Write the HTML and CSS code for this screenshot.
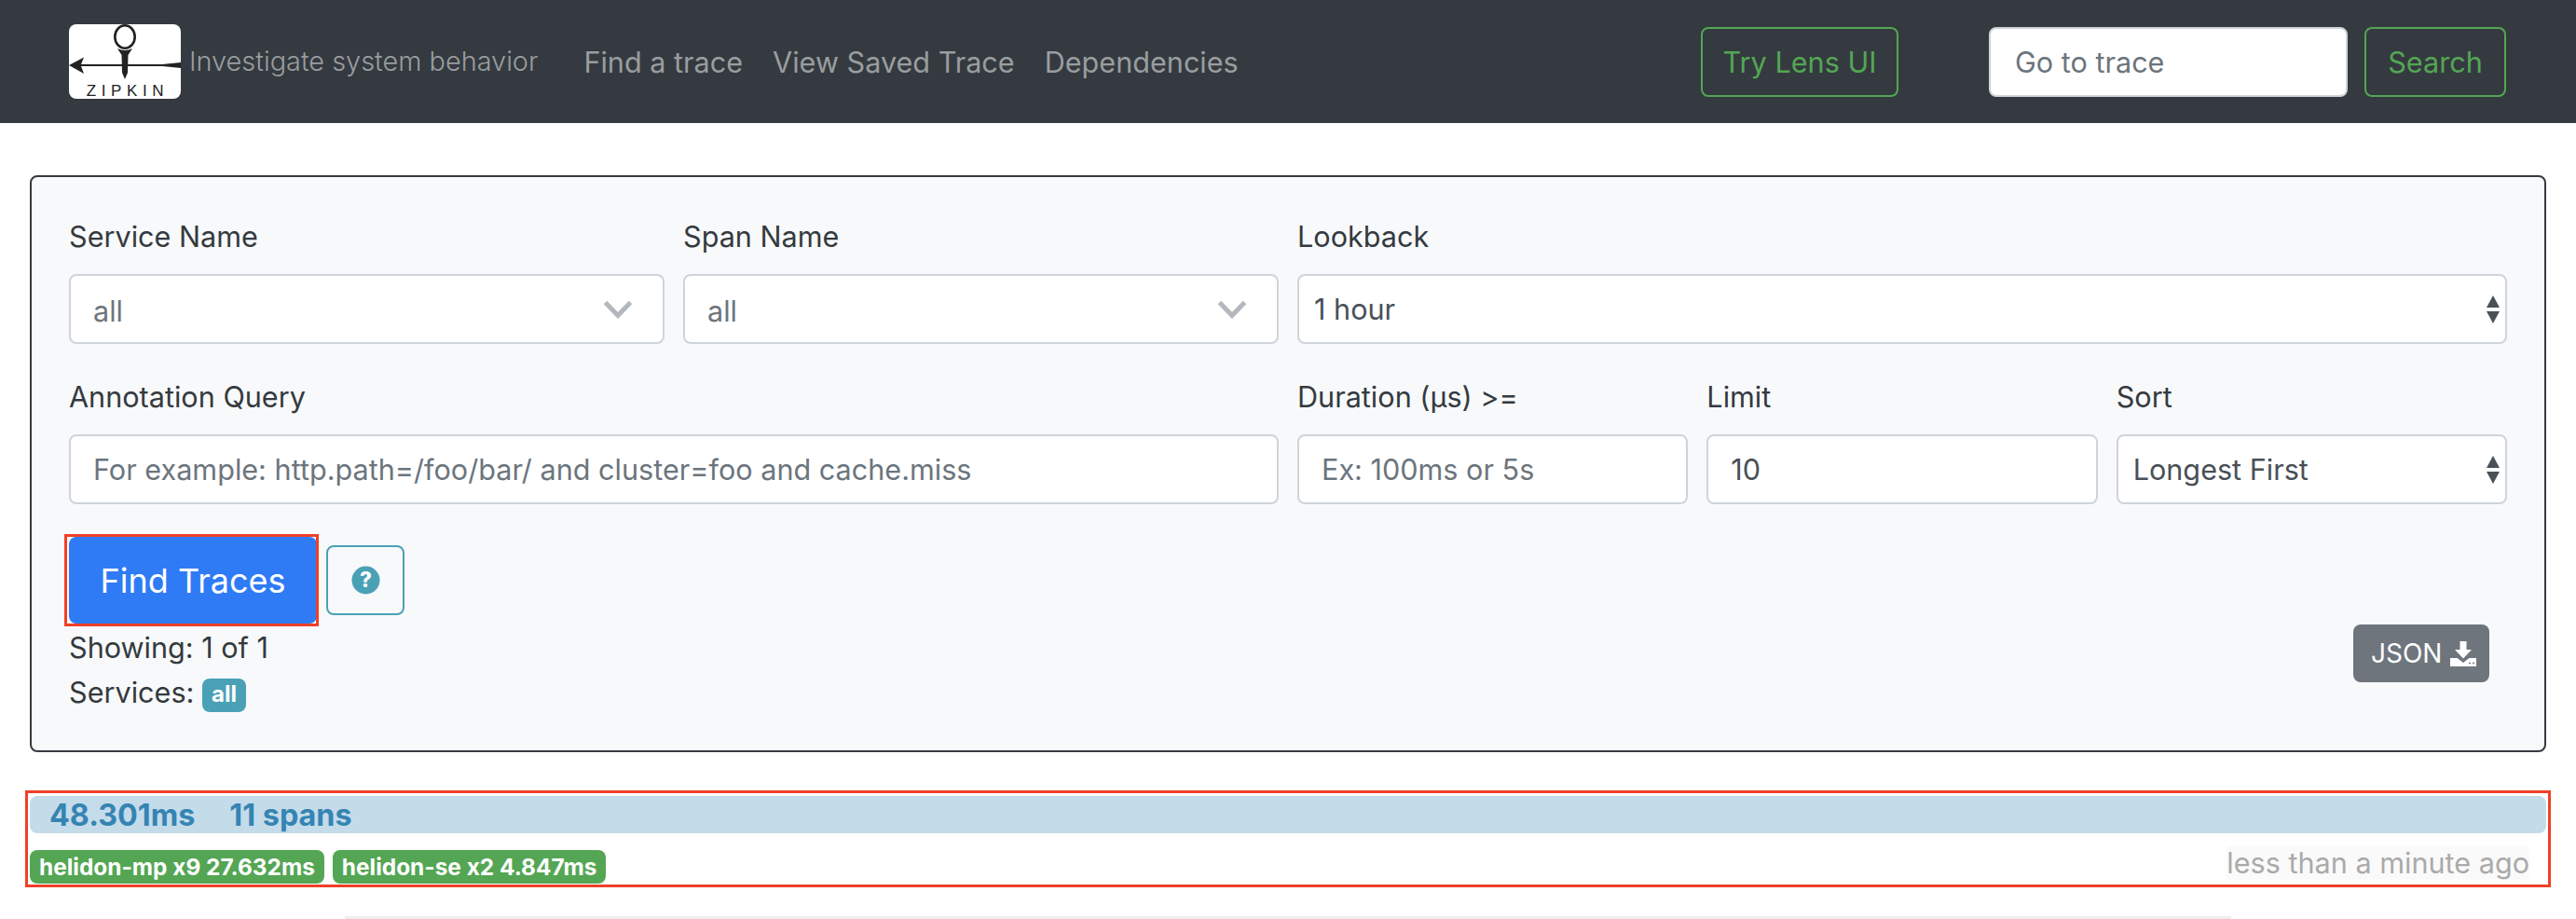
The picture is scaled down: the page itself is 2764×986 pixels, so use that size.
FILE: index.html
```html
<!DOCTYPE html>
<html lang="en">
<head>
<meta charset="utf-8">
<title>Zipkin</title>
<link rel="stylesheet" href="styles.css">
</head>
<body>
<nav class="navbar">
  <a class="brand">
    <span class="logo">
      <svg class="logo-mark" viewBox="0 0 120 64" width="120" height="64">
        <ellipse cx="60" cy="13.5" rx="10.7" ry="12.2" fill="none" stroke="#222" stroke-width="2.6"/>
        <path d="M52 26 Q60 30 68 26 L63.5 33 L63 52 L60 59 L57 52 L56.5 33 Z" fill="#222"/>
        <path d="M0 44 L16 35.5 L13 43 L100 43 L120 41 L120 47 L100 45 L13 45 L16 53 Z" fill="#222"/>
      </svg>
      <span class="logo-text">ZIPKIN</span>
    </span>
    <span class="tagline">Investigate system behavior</span>
  </a>
  <div class="nav-links">
    <a class="nav-link">Find a trace</a>
    <a class="nav-link">View Saved Trace</a>
    <a class="nav-link">Dependencies</a>
  </div>
  <a class="btn-green lens">Try Lens UI</a>
  <input class="goto" placeholder="Go to trace">
  <a class="btn-green search">Search</a>
</nav>

<main class="content">
  <section class="panel">
    <form class="form-grid">
      <div class="field c3">
        <label class="lbl">Service Name</label>
        <div class="control pick"><span class="pick-val">all</span>
          <svg class="chev" viewBox="0 0 32 20" width="32" height="20"><path d="M2.5 2.5 L16 16.5 L29.5 2.5" fill="none" stroke="#b3b8bf" stroke-width="5"/></svg>
        </div>
      </div>
      <div class="field c3">
        <label class="lbl">Span Name</label>
        <div class="control pick"><span class="pick-val">all</span>
          <svg class="chev" viewBox="0 0 32 20" width="32" height="20"><path d="M2.5 2.5 L16 16.5 L29.5 2.5" fill="none" stroke="#b3b8bf" stroke-width="5"/></svg>
        </div>
      </div>
      <div class="field c6">
        <label class="lbl">Lookback</label>
        <div class="control sel"><span>1 hour</span>
          <svg class="updown" viewBox="0 0 14 30" width="14" height="30"><path d="M7 0 L14 13 L0 13 Z M7 30 L0 17 L14 17 Z" fill="#495057"/></svg>
        </div>
      </div>
      <div class="field c6">
        <label class="lbl">Annotation Query</label>
        <input class="control text" placeholder="For example: http.path=/foo/bar/ and cluster=foo and cache.miss">
      </div>
      <div class="field c2">
        <label class="lbl">Duration (μs) &gt;=</label>
        <input class="control text" placeholder="Ex: 100ms or 5s">
      </div>
      <div class="field c2">
        <label class="lbl">Limit</label>
        <input class="control text" value="10">
      </div>
      <div class="field c2">
        <label class="lbl">Sort</label>
        <div class="control sel"><span>Longest First</span>
          <svg class="updown" viewBox="0 0 14 30" width="14" height="30"><path d="M7 0 L14 13 L0 13 Z M7 30 L0 17 L14 17 Z" fill="#495057"/></svg>
        </div>
      </div>
    </form>

    <div class="actions">
      <button class="find" type="button">Find Traces</button>
      <button class="help" type="button" aria-label="Help">
        <svg viewBox="0 0 32 32" width="31" height="31"><circle cx="16" cy="16" r="15.5" fill="#4aa1b6"/><text class="q" x="16" y="24" text-anchor="middle">?</text></svg>
      </button>
    </div>

    <div class="summary">
      <div class="summary-text">
        <div class="line showing">Showing: 1 of 1</div>
        <div class="line services">Services: <span class="badge-all">all</span></div>
      </div>
      <a class="json">JSON
        <svg viewBox="0 0 28 28" width="28" height="28"><path d="M10.5 1 H17.5 V10 H23 L14 19.5 L5 10 H10.5 Z M0 19 H7.5 L14 24 L20.5 19 H28 V28 H0 Z" fill="#fff"/><circle cx="21" cy="24.5" r="1" fill="#6e757d"/><circle cx="25" cy="24.5" r="1" fill="#6e757d"/></svg>
      </a>
    </div>
  </section>

  <section class="trace">
    <div class="trace-bar"><span class="dur">48.301ms</span><span class="spans">11 spans</span></div>
    <div class="trace-row">
      <div class="tags">
        <span class="tag">helidon-mp x9 27.632ms</span>
        <span class="tag">helidon-se x2 4.847ms</span>
      </div>
      <span class="ago">less than a minute ago</span>
    </div>
  </section>
  <div class="next-trace"></div>
</main>
</body>
</html>
```

FILE: styles.css
```css
* { box-sizing: border-box; }
html, body { margin: 0; height: 986px; overflow: hidden; background: #fff; }
body { font-family: Inter, "Liberation Sans", sans-serif; font-size: 30.6px; color: #343a40; }

.navbar { display: flex; align-items: center; height: 132px; background: #343a40; padding: 0 75px 0 74px; }
.brand { display: flex; align-items: center; }
.logo { display: flex; flex-direction: column; width: 120px; height: 80px; overflow: hidden; border-radius: 8px; background: #fff; }
.logo-mark { display: block; flex: none; }
.logo-text { height: 16px; padding-left: 6px; font-family: "Liberation Sans", sans-serif; font-size: 17px; line-height: 16px; letter-spacing: 5.6px; color: #222; text-align: center; }
.tagline { margin-left: 9px; margin-top: -2px; font-size: 28.9px; color: #9a9d9f; font-weight: 300; white-space: nowrap; }
.nav-links { display: flex; gap: 32px; margin-left: 49px; }
.nav-link { color: #9a9d9f; white-space: nowrap; }
.btn-green { display: flex; align-items: center; justify-content: center; height: 75px; border: 2px solid #54a654; border-radius: 8px; color: #54a654; }
.lens { width: 212px; margin-left: auto; }
.goto { width: 385px; height: 75px; margin-left: 97px; padding: 0 26px; border: 2px solid #ced4da; border-radius: 8px; background: #fff; font: inherit; }
.goto::placeholder { color: #6c757d; opacity: 1; }
.search { width: 152px; margin-left: 18px; }

.content { padding: 56px 32px 0; position: relative; }
.panel { height: 619px; padding: 0 40px; border: 2px solid #343a40; border-radius: 8px; background: #f8f9fa; }
.form-grid { display: grid; grid-template-columns: repeat(12, 1fr); column-gap: 20px; row-gap: 0; padding-top: 44px; }
.field { display: flex; flex-direction: column; }
.c2 { grid-column: span 2; }
.c3 { grid-column: span 3; }
.c6 { grid-column: span 6; }
.lbl { height: 60px; line-height: 40px; white-space: nowrap; }
.control { height: 75px; width: 100%; border: 2px solid #ced4da; border-radius: 8px; background: #fff; font: inherit; color: #495057; margin-bottom: 37px; }
.pick, .sel { display: flex; align-items: center; justify-content: space-between; }
.pick { padding: 0 32px 0 24px; }
.pick-val { color: #6c757d; padding-top: 3px; }
.sel { padding: 0 6px 0 16px; }
.text { padding: 0 24px; }
.text::placeholder { color: #6c757d; opacity: 1; }

.actions { display: flex; align-items: center; gap: 10px; margin-top: -2px; }
.find { width: 266px; height: 93px; padding: 0; border: 0; border-radius: 8px; background: #2f7bf6; color: #fff; font: inherit; font-size: 36px; position: relative; }
.find::after { content: ""; position: absolute; top: -3px; left: -5px; right: -2px; bottom: -3px; border: 3px solid #ee4028; pointer-events: none; }
.help { display: flex; align-items: center; justify-content: center; width: 84px; height: 75px; padding: 0; background: transparent; border: 2px solid #4aa1b6; border-radius: 8px; }
.q { font-family: Inter, sans-serif; font-weight: 800; font-size: 23px; fill: #fff; }

.summary { display: flex; justify-content: space-between; align-items: flex-start; padding-right: 19px; }
.line { height: 48px; line-height: 48px; }
.showing { margin-top: 2px; }
.badge-all { display: inline-block; height: 36px; width: 47px; border-radius: 8px; background: #4aa1b6; color: #fff; font-size: 24px; font-weight: 700; line-height: 34px; text-align: center; vertical-align: 1px; }
.json { display: flex; align-items: center; gap: 9px; height: 62px; width: 146px; margin-top: 1px; padding-left: 19px; border-radius: 8px; background: #6e757d; color: #fff; font-size: 28px; }

.trace { position: relative; margin-top: 47px; }
.trace::after { content: ""; position: absolute; top: -6px; left: -5px; right: -5px; bottom: -4px; border: 3px solid #ee4028; pointer-events: none; }
.trace-bar { display: flex; align-items: center; height: 40px; padding-left: 21px; border-radius: 8px; background: #c4dbea; color: #3584b3; font-weight: 700; font-size: 32.3px; }
.spans { margin-left: 37px; }
.trace-row { display: flex; justify-content: space-between; align-items: flex-start; margin-top: 14px; padding-right: 18px; }
.tags { display: flex; gap: 9px; margin-top: 4px; }
.tag { display: flex; align-items: center; height: 36px; padding: 0 10px; border-radius: 8px; background: #54a654; color: #fff; font-size: 24.4px; font-weight: 700; white-space: nowrap; }
.ago { height: 36px; line-height: 36px; background: #fafafa; color: #aaa; white-space: nowrap; }
.next-trace { height: 3px; margin: 35px 338px 0; background: #eee; }
```
